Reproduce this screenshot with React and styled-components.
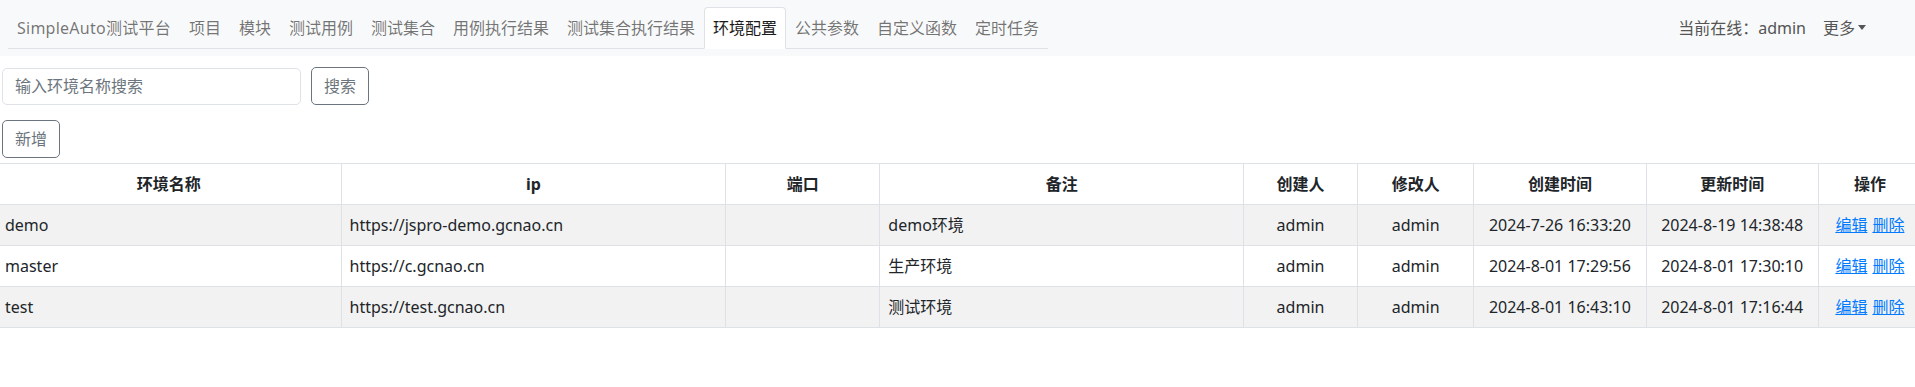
import React from "react";
import styled, { createGlobalStyle } from "styled-components";

const GlobalStyle = createGlobalStyle`
  html, body {
    margin: 0;
    padding: 0;
    background: #fff;
    overflow: hidden;
  }
  body {
    font-family: "Noto Sans", "Noto Sans CJK SC", sans-serif;
    font-size: 16px;
    line-height: 24px;
    color: #212529;
  }
  * { box-sizing: border-box; }
`;

const Navbar = styled.nav`
  display: flex;
  align-items: center;
  justify-content: space-between;
  height: 56px;
  padding: 7px 49px 8px 8px;
  background: #f8f9fa;
`;

const Tabs = styled.ul`
  display: flex;
  margin: 0;
  padding: 0;
  list-style: none;
  border-bottom: 1px solid #dee2e6;
`;

const TabItem = styled.li`
  margin-bottom: -1px;
`;

const TabLink = styled.a`
  display: block;
  padding: 8px;
  border: 1px solid ${(p) => (p.$active ? "#dee2e6" : "transparent")};
  border-bottom-color: ${(p) => (p.$active ? "#fff" : "transparent")};
  border-radius: 4px 4px 0 0;
  background: ${(p) => (p.$active ? "#fff" : "transparent")};
  color: ${(p) => (p.$active ? "#1a1a1a" : "rgba(0,0,0,0.55)")};
  letter-spacing: ${(p) => (p.$brand ? "0.25px" : "normal")};
  text-decoration: none;
  white-space: nowrap;
  cursor: pointer;
`;

const RightGroup = styled.div`
  display: flex;
  align-items: center;
  gap: 17px;
  color: #555;
  white-space: nowrap;
`;

const Dropdown = styled.span`
  display: inline-flex;
  align-items: center;
  color: #555;
  &::after {
    content: "";
    display: inline-block;
    margin-left: 3px;
    border-top: 5px solid #555;
    border-left: 4px solid transparent;
    border-right: 4px solid transparent;
  }
`;

const Content = styled.main`
  padding: 11px 0 0 2px;
`;

const SearchRow = styled.div`
  display: flex;
  align-items: center;
  gap: 10px;
`;

const SearchInput = styled.input`
  width: 299px;
  height: 37px;
  padding: 6px 12px;
  font: inherit;
  color: #495057;
  border: 1px solid #dfe2e6;
  border-radius: 5px;
  outline: none;
  &::placeholder {
    color: #6c757d;
  }
`;

const OutlineButton = styled.button`
  height: 38px;
  padding: 6px 12px;
  font: inherit;
  line-height: 24px;
  color: #6c757d;
  background: transparent;
  border: 1px solid #6c757d;
  border-radius: 5px;
  cursor: pointer;
`;

const ActionRow = styled.div`
  margin-top: 15px;
`;

const TableWrap = styled.div`
  margin-top: 5px;
  margin-left: -4px;
`;

const Table = styled.table`
  width: calc(100% + 7px);
  border-collapse: collapse;
  table-layout: fixed;
`;

const Th = styled.th`
  padding: 8px;
  border: 1px solid #dee2e6;
  font-weight: 700;
  text-align: center;
  color: #212529;
  white-space: nowrap;
  height: 41px;
`;

const Tr = styled.tr`
  background: ${(p) => (p.$striped ? "#f2f2f2" : "#fff")};
`;

const Td = styled.td`
  padding: 8px;
  border: 1px solid #dee2e6;
  text-align: ${(p) => (p.$center ? "center" : "left")};
  white-space: nowrap;
  height: 41px;
`;

const LinkText = styled.a`
  color: #007bff;
  text-decoration: underline;
  cursor: pointer;
  & + & {
    margin-left: 5px;
  }
`;

const navItems = [
  "SimpleAuto测试平台",
  "项目",
  "模块",
  "测试用例",
  "测试集合",
  "用例执行结果",
  "测试集合执行结果",
  "环境配置",
  "公共参数",
  "自定义函数",
  "定时任务",
];

const columns = [
  { title: "环境名称", width: 344 },
  { title: "ip", width: 384 },
  { title: "端口", width: 154 },
  { title: "备注", width: 363 },
  { title: "创建人", width: 114 },
  { title: "修改人", width: 116 },
  { title: "创建时间", width: 172 },
  { title: "更新时间", width: 172 },
  { title: "操作", width: 103 },
];

const rows = [
  {
    name: "demo",
    ip: "https://jspro-demo.gcnao.cn",
    port: "",
    remark: "demo环境",
    creator: "admin",
    modifier: "admin",
    created: "2024-7-26 16:33:20",
    updated: "2024-8-19 14:38:48",
  },
  {
    name: "master",
    ip: "https://c.gcnao.cn",
    port: "",
    remark: "生产环境",
    creator: "admin",
    modifier: "admin",
    created: "2024-8-01 17:29:56",
    updated: "2024-8-01 17:30:10",
  },
  {
    name: "test",
    ip: "https://test.gcnao.cn",
    port: "",
    remark: "测试环境",
    creator: "admin",
    modifier: "admin",
    created: "2024-8-01 16:43:10",
    updated: "2024-8-01 17:16:44",
  },
];

export default function App() {
  return (
    <>
      <GlobalStyle />
      <Navbar>
        <Tabs>
          {navItems.map((item, i) => (
            <TabItem key={item}>
              <TabLink $brand={i === 0} $active={item === "环境配置"}>
                {item}
              </TabLink>
            </TabItem>
          ))}
        </Tabs>
        <RightGroup>
          <span>当前在线：admin</span>
          <Dropdown>更多</Dropdown>
        </RightGroup>
      </Navbar>
      <Content>
        <SearchRow>
          <SearchInput placeholder="输入环境名称搜索" />
          <OutlineButton>搜索</OutlineButton>
        </SearchRow>
        <ActionRow>
          <OutlineButton>新增</OutlineButton>
        </ActionRow>
      </Content>
      <TableWrap>
        <Table>
          <colgroup>
            {columns.map((c) => (
              <col key={c.title} style={{ width: c.width }} />
            ))}
          </colgroup>
          <thead>
            <tr>
              {columns.map((c) => (
                <Th key={c.title}>{c.title}</Th>
              ))}
            </tr>
          </thead>
          <tbody>
            {rows.map((r, i) => (
              <Tr key={r.name} $striped={i % 2 === 0}>
                <Td>{r.name}</Td>
                <Td>{r.ip}</Td>
                <Td>{r.port}</Td>
                <Td>{r.remark}</Td>
                <Td $center>{r.creator}</Td>
                <Td $center>{r.modifier}</Td>
                <Td $center>{r.created}</Td>
                <Td $center>{r.updated}</Td>
                <Td $center>
                  <LinkText>编辑</LinkText>
                  <LinkText>删除</LinkText>
                </Td>
              </Tr>
            ))}
          </tbody>
        </Table>
      </TableWrap>
    </>
  );
}
